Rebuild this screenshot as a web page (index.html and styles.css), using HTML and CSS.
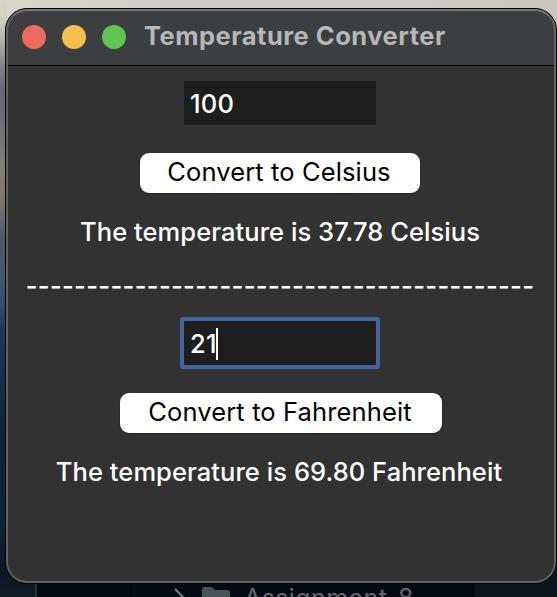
FILE: index.html
```html
<!DOCTYPE html>
<html lang="en">
<head>
<meta charset="utf-8">
<title>Temperature Converter</title>
<link rel="stylesheet" href="styles.css">
</head>
<body>
<div class="desktop">
  <div class="finder">
    <div class="sidebar"></div>
    <div class="file-row">
      <svg class="chevron" width="14" height="24" viewBox="0 0 14 24"><path d="M2 2l10 10L2 22" fill="none" stroke="currentColor" stroke-width="2"/></svg>
      <svg class="folder" width="28" height="24" viewBox="0 0 28 24"><path d="M0 3Q0 0 3 0H9Q11 0 12 2Q13 3 15 3H25Q28 3 28 6V21Q28 24 25 24H3Q0 24 0 21Z" fill="currentColor"/></svg>
      <span class="file-name">Assignment_8</span>
    </div>
    <div class="details"></div>
  </div>
  <main class="window">
    <header class="titlebar">
      <span class="light close"></span>
      <span class="light minimize"></span>
      <span class="light maximize"></span>
      <h1 class="title">Temperature Converter</h1>
    </header>
    <section class="content">
      <div class="field">100</div>
      <button class="convert celsius">Convert to Celsius</button>
      <p class="result">The temperature is 37.78 Celsius</p>
      <p class="divider">------------------------------------------</p>
      <div class="field focused">21<span class="caret"></span></div>
      <button class="convert fahrenheit">Convert to Fahrenheit</button>
      <p class="result">The temperature is 69.80 Fahrenheit</p>
    </section>
  </main>
</div>
</body>
</html>
```
FILE: styles.css
```css
* { box-sizing: border-box; }
body {
  margin: 0;
  overflow: hidden;
  font-family: Inter, "Liberation Sans", sans-serif;
}
.desktop {
  position: relative;
  width: 557px;
  height: 597px;
  padding: 8px 0 0 5px;
  background:
    linear-gradient(90deg, #d9d7ca, #d0cdc7 30%, #d0cdc7 60%, #c9c7bd) 7px 0 / 550px 24px no-repeat,
    linear-gradient(180deg, #d9d7ca, #d0cec1 20px, #bbb9b1 35px, #7d7e84 70px, #65677a 90px, #716f71 125px, #828074 170px, #77756f 205px, #50596b 235px, #46566f 275px, #304e78 305px, #233455 330px, #202c50 370px, #15213f 430px, #14213c 520px, #0c1725 570px, #101c25 597px);
}
.finder {
  position: absolute;
  left: 35px;
  top: 560px;
  width: 522px;
  height: 37px;
  display: flex;
  background: #060a15;
  border-left: 2px solid #2c3136;
}
.sidebar { width: 95px; border-right: 2px solid #02050b; }
.file-row {
  width: 340px;
  display: flex;
  align-items: flex-start;
  padding: 27px 0 0 41px;
  color: #777a7b;
}
.chevron { flex: none; margin-right: 15px; }
.folder { flex: none; margin-right: 14px; color: #4a5458; }
.file-name {
  font-size: 25px;
  line-height: 22px;
  letter-spacing: 0.4px;
  white-space: nowrap;
  color: #66696b;
}
.details { flex: 1; background: #0d131d; border-left: 2px solid #02050a; }
.window {
  position: relative;
  width: 552px;
  height: 576px;
  border: 1px solid #000;
  border-radius: 22px;
  background: #323232;
  overflow: hidden;
}
.window::after {
  content: "";
  position: absolute;
  inset: 0;
  border: 2px solid #626262;
  border-top-color: #73777a;
  border-radius: 21px;
}
.titlebar {
  height: 57px;
  display: flex;
  align-items: center;
  padding-left: 16px;
  background: #3c3e40;
  border-bottom: 1px solid #000;
}
.light { width: 24px; height: 24px; margin-right: 16px; border-radius: 50%; }
.close { background: #ed6a5e; }
.minimize { background: #f5bf4f; }
.maximize { background: #61c554; }
.title {
  margin: 0 0 2px 2px;
  font-size: 25.5px;
  font-weight: 700;
  line-height: 30px;
  letter-spacing: 0.5px;
  color: #b6b7b8;
  white-space: nowrap;
}
.content {
  display: flex;
  flex-direction: column;
  align-items: center;
  padding-top: 15px;
  padding-right: 2px;
}
.field {
  width: 192px;
  height: 44px;
  padding: 1px 0 0 6px;
  display: flex;
  align-items: center;
  background: #1e1e1e;
  box-shadow: 0 1px 0 #3a3a3a;
  color: #fff;
  font-size: 25.5px;
  font-weight: 500;
  letter-spacing: 0.2px;
}
.focused { box-shadow: 0 0 0 4px #44659a; border-radius: 1px; }
.caret { width: 2px; height: 32px; margin-left: -0.5px; background: #fff; }
.convert {
  height: 40px;
  margin-top: 28px;
  padding: 0 2px 2px 0;
  border: 0;
  border-radius: 9px;
  background: #fff;
  box-shadow: 0 1px 2px #222;
  color: #000;
  font: 25.5px/38px Inter, "Liberation Sans", sans-serif;
  letter-spacing: 0.12px;
}
.celsius { width: 280px; }
.fahrenheit { width: 322px; margin-left: 2px; }
.result, .divider {
  margin: 24px 0 0;
  color: #fff;
  font-size: 25.5px;
  font-weight: 500;
  line-height: 30px;
  letter-spacing: 0.06px;
  white-space: nowrap;
}
.divider { margin: 24px 0 20px; letter-spacing: 0.32px; }
.fahrenheit + .result { margin-right: 2px; }
```
